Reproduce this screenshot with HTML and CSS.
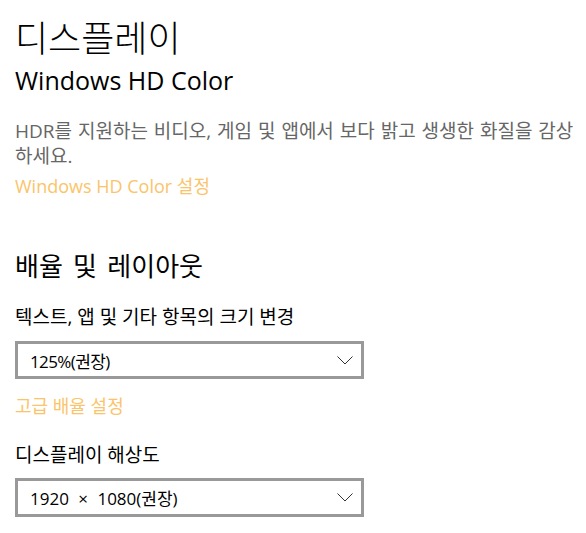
FILE: index.html
```html
<!DOCTYPE html>
<html lang="ko">
<head>
<meta charset="utf-8">
<link rel="stylesheet" href="styles.css">
</head>
<body>
<main class="page">
  <h1 class="title">디스플레이</h1>
  <h2 class="subtitle">Windows HD Color</h2>
  <p class="desc">HDR를 지원하는 비디오, 게임 및 앱에서 보다 밝고 생생한 화질을 감상하세요.</p>
  <a class="link">Windows HD Color 설정</a>

  <h2 class="section">배율 및 레이아웃</h2>
  <div class="label">텍스트, 앱 및 기타 항목의 크기 변경</div>
  <div class="select select1">
    <span>125%(권장)</span>
    <svg class="chev" width="16" height="9" viewBox="0 0 16 9"><path d="M0.5 0.5 L8 8 L15.5 0.5" fill="none" stroke="#333" stroke-width="1"/></svg>
  </div>
  <a class="link link2">고급 배율 설정</a>
  <div class="label label2">디스플레이 해상도</div>
  <div class="select select2">
    <span>1920 × 1080(권장)</span>
    <svg class="chev" width="16" height="9" viewBox="0 0 16 9"><path d="M0.5 0.5 L8 8 L15.5 0.5" fill="none" stroke="#333" stroke-width="1"/></svg>
  </div>
</main>
</body>
</html>
```

FILE: styles.css
```css
html, body {
  margin: 0;
  padding: 0;
  background: #fff;
}
body {
  font-family: "Open Sans", "Noto Sans CJK KR", sans-serif;
  color: #000;
}
.page {
  padding: 12px 10px 0 15px;
  display: flex;
  flex-direction: column;
  align-items: flex-start;
}
.title {
  margin: 0;
  font-family: "Noto Sans CJK KR", sans-serif;
  font-weight: 300;
  font-size: 36px;
  line-height: 48px;
}
.subtitle {
  margin: 3px 0 0;
  font-weight: 400;
  font-size: 25px;
  line-height: 34px;
}
.desc {
  margin: 22px 0 0;
  color: #666;
  font-size: 19px;
  line-height: 25px;
  word-spacing: 1px;
}
.link {
  margin-top: 5px;
  color: #fbc46a;
  font-size: 18px;
  line-height: 25px;
}
.section {
  margin: 48px 0 0;
  font-weight: 400;
  font-family: "Noto Sans CJK KR", sans-serif;
  font-size: 26px;
  line-height: 36px;
  word-spacing: 3px;
}
.label {
  margin-top: 22px;
  font-size: 19px;
  line-height: 25px;
}
.label2 {
  margin-top: 24px;
}
.select {
  margin-top: 11px;
  box-sizing: border-box;
  width: 349px;
  height: 38px;
  border: 3px solid #999;
  display: flex;
  align-items: center;
  justify-content: space-between;
  padding: 0 8px 0 12px;
  font-size: 17px;
}
.select1 span {
  letter-spacing: -0.6px;
}
.select2 {
  margin-top: 10px;
  height: 39px;
}
.select2 span {
  word-spacing: 5px;
}
.link2 {
  margin-top: 15px;
}
```
